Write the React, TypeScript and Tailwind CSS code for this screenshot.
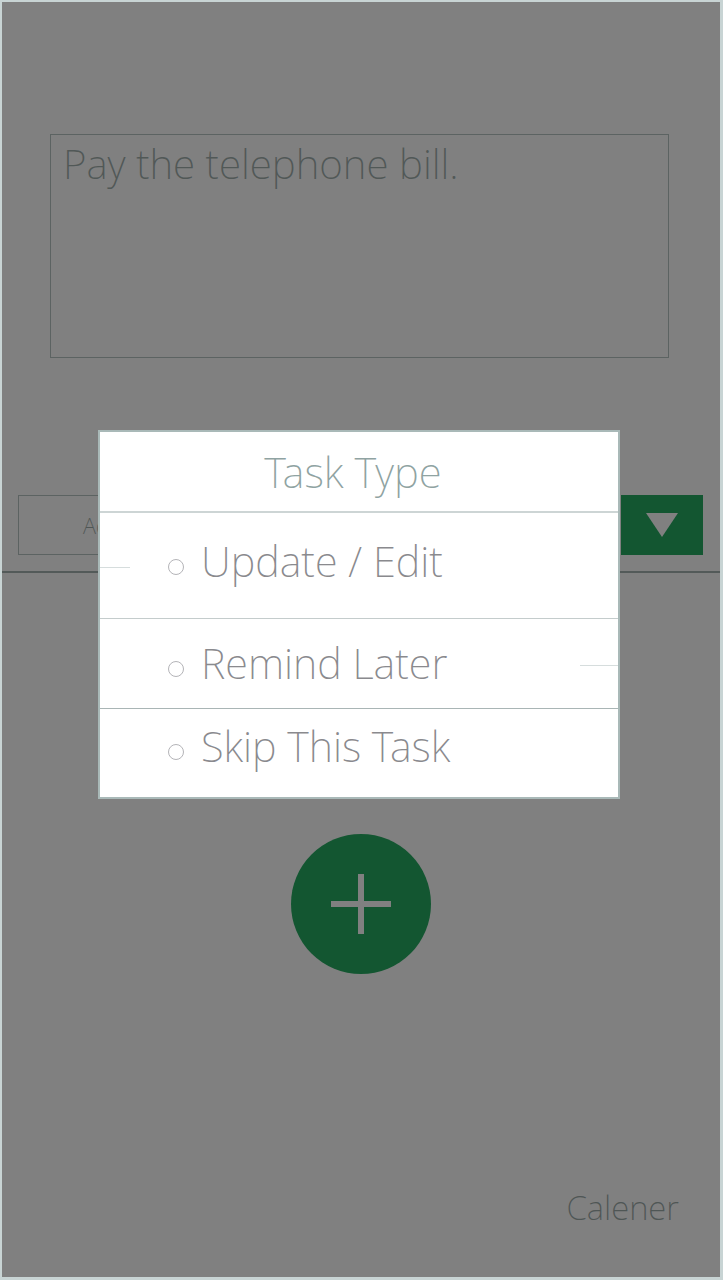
import React from "react";

const font = { fontFamily: '"Noto Sans", "Open Sans", sans-serif' };

function Option({ label, className }: { label: string; className: string }) {
  return (
    <div className={`flex items-center pl-[68px] ${className}`}>
      <span className="w-[16px] h-[16px] mt-[10px] rounded-full border border-[#b4b4b8] shrink-0" />
      <span className="ml-[17px] text-[41.5px] font-extralight text-[#8a8a8e] leading-none">{label}</span>
    </div>
  );
}

export default function App() {
  return (
    <div className="w-[723px] h-[1280px] bg-[#c8d4d4] pt-[2px] pl-[2px] pr-[3px] pb-[3px]" style={font}>
      <div className="relative h-full bg-[#808080] flex flex-col">
        {/* task text */}
        <div className="mt-[132px] ml-[48px] w-[619px] h-[224px] border border-[#5c6362] px-[12px] pt-[3px]">
          <p className="text-[40.5px] font-extralight text-[#515857] leading-[52px]">Pay the telephone bill.</p>
        </div>

        {/* type select row */}
        <div className="mt-[137px] flex items-stretch h-[60px]">
          <div className="ml-[16px] w-[560px] border border-[#5c6362] flex items-center pl-[64px]">
            <span className="text-[22px] font-extralight text-[#4f5655]">Add Reminder</span>
          </div>
          <div className="ml-[43px] w-[82px] bg-[#135631] flex items-center justify-center">
            <svg width="34" height="26" viewBox="0 0 34 26">
              <polygon points="1,1 33,1 17,25" fill="#808080" />
            </svg>
          </div>
        </div>
        <div className="mt-[16px] h-[2px] bg-[#535a59]" />

        {/* add button */}
        <div className="mt-[261px] flex justify-center">
          <button className="w-[140px] h-[140px] rounded-full bg-[#135631] flex items-center justify-center">
            <svg width="60" height="60" viewBox="0 0 60 60">
              <rect x="0" y="27" width="60" height="6" fill="#808080" />
              <rect x="27" y="0" width="6" height="60" fill="#808080" />
            </svg>
          </button>
        </div>

        <div className="mt-auto mb-[45px] flex justify-end pr-[41px]">
          <span className="text-[33px] font-extralight text-[#4f5655]">Calener</span>
        </div>

        {/* task type dialog */}
        <div className="absolute left-[96px] top-[428px] w-[522px] h-[369px] bg-white border-2 border-[#a9b9b8] flex flex-col">
          <div className="h-[81px] flex items-center justify-center pr-[12px] border-b-2 border-[#cdd5d5]">
            <span className="text-[42px] font-extralight text-[#8fa3a2] leading-none">Task Type</span>
          </div>
          <Option label="Update / Edit" className="h-[106px] border-b border-[#c4cccc] pb-[8px]" />
          <Option label="Remind Later" className="h-[90px] border-b border-[#a9b5b5]" />
          <Option label="Skip This Task" className="flex-1 pb-[12px]" />
          <span className="absolute left-0 top-[135px] w-[30px] h-px bg-[#d6dddd]" />
          <span className="absolute right-0 top-[233px] w-[38px] h-px bg-[#d6dddd]" />
        </div>
      </div>
    </div>
  );
}
